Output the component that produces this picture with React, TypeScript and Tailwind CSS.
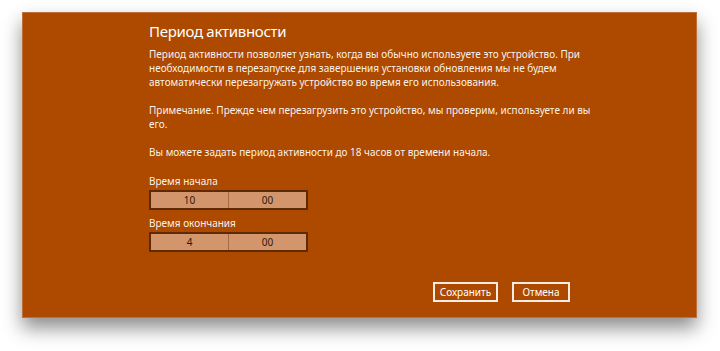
import React from 'react';

const TimeField = ({ label, hours, minutes }: { label: string; hours: string; minutes: string }) => (
    <div className="flex flex-col">
        <div className="text-[10px] leading-[14px] text-white/95">{label}</div>
        <div className="mt-[2px] flex w-[159px] h-[20px] border-2 border-[#5e2a04] bg-[#d3956b] text-[10px] text-[#2e1a0c]">
            <div className="flex-1 flex items-center justify-center border-r border-[#a86a42]">{hours}</div>
            <div className="flex-1 flex items-center justify-center">{minutes}</div>
        </div>
    </div>
);

const App = () => {
    return (
        <div className="w-[720px] h-[351px] bg-white overflow-hidden pt-[12px] pl-[22px]" style={{ fontFamily: '"Noto Sans", "Open Sans", sans-serif' }}>
            <div className="w-[675px] h-[306px] bg-[#ad4a00] border border-[#c0703a] shadow-[0_10px_18px_rgba(0,0,0,0.45)] pl-[126px] pt-[7px] flex flex-col text-white">
                <h1 className="text-[15px] leading-[22px] tracking-[-0.3px] font-normal">Период активности</h1>

                <p className="mt-[5px] text-[10px] leading-[14px] text-white/95">
                    Период активности позволяет узнать, когда вы обычно используете это устройство. При<br />
                    необходимости в перезапуске для завершения установки обновления мы не будем<br />
                    автоматически перезагружать устройство во время его использования.
                </p>

                <p className="mt-[14px] text-[10px] leading-[14px] text-white/95">
                    Примечание. Прежде чем перезагрузить это устройство, мы проверим, используете ли вы<br />
                    его.
                </p>

                <p className="mt-[14px] text-[10px] leading-[14px] text-white/95">
                    Вы можете задать период активности до 18 часов от времени начала.
                </p>

                <div className="mt-[15px] flex flex-col gap-[6px]">
                    <TimeField label="Время начала" hours="10" minutes="00" />
                    <TimeField label="Время окончания" hours="4" minutes="00" />
                </div>

                <div className="mt-[30px] flex gap-[14px] pl-[284px]">
                    <button className="w-[65px] h-[20px] border-2 border-white/90 text-[10px] text-white flex items-center justify-center">Сохранить</button>
                    <button className="w-[58px] h-[20px] border-2 border-white/90 text-[10px] text-white flex items-center justify-center">Отмена</button>
                </div>
            </div>
        </div>
    );
};

export default App;
